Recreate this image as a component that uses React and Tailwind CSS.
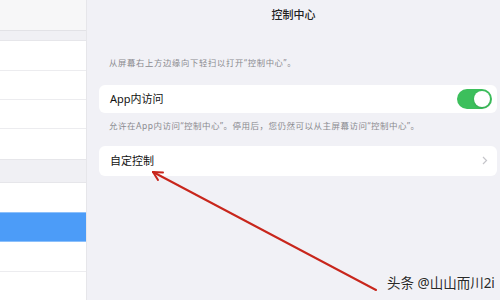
import React from "react";

const font = { fontFamily: '"Noto Sans", "Noto Sans CJK SC", sans-serif' };

const Toggle = () => (
  <div className="w-[35px] h-[20px] rounded-full bg-[#3cbf5c] p-[2px] flex justify-end">
    <div className="w-[16px] h-[16px] rounded-full bg-white shadow" />
  </div>
);

export default function App() {
  return (
    <div
      className="w-[500px] h-[300px] flex overflow-hidden bg-[#f1f1f6] relative"
      style={font}
    >
      {/* sidebar */}
      <div className="w-[87px] h-full bg-white flex flex-col border-r border-[#e6e6ea]">
        <div className="h-[31px] bg-[#f7f7f8] border-b border-[#e2e2e6]" />
        <div className="h-[10px] bg-[#f0f0f4] border-b border-[#e6e6ea]" />
        <div className="h-[30px] border-b border-[#ececef]" />
        <div className="h-[29px] border-b border-[#ececef]" />
        <div className="h-[29px] border-b border-[#ececef]" />
        <div className="h-[30px]" />
        <div className="h-[24px] bg-[#f0f0f4] border-y border-[#e6e6ea]" />
        <div className="h-[29px]" />
        <div className="h-[30px] bg-[#4c9cf8] border-y border-[#8cc0fb]" />
        <div className="h-[30px] border-b border-[#ececef]" />
        <div className="flex-1" />
      </div>

      {/* detail pane */}
      <div className="flex-1 flex flex-col">
        <div className="h-[31px] flex items-center justify-center text-[11px] font-medium text-[#222]">
          控制中心
        </div>
        <div className="pl-[12px] pr-[3px] pt-[28px]">
          <p className="pl-[10px] text-[8.3px] tracking-[0.7px] text-[#8a8a8f] leading-none">
            从屏幕右上方边缘向下轻扫以打开“控制中心”。
          </p>
          <div className="mt-[18px] h-[28px] bg-white rounded-[6px] flex items-center justify-between pl-[11px] pr-[5px]">
            <span className="text-[11px] text-[#111]">App内访问</span>
            <Toggle />
          </div>
          <p className="pl-[10px] mt-[9px] text-[8.5px] tracking-[0.5px] text-[#8a8a8f] leading-none">
            允许在App内访问“控制中心”。停用后，您仍然可以从主屏幕访问“控制中心”。
          </p>
          <div className="mt-[15px] h-[30px] bg-white rounded-[6px] flex items-center justify-between pl-[11px] pr-[9px]">
            <span className="text-[11px] text-[#111]">自定控制</span>
            <svg width="6" height="9" viewBox="0 0 6 9">
              <path d="M1 1 L4.5 4.5 L1 8" stroke="#c5c5ca" strokeWidth="1.2" fill="none" />
            </svg>
          </div>
        </div>
      </div>

      {/* annotation arrow */}
      <svg
        className="absolute left-0 top-0 pointer-events-none"
        width="500"
        height="300"
        viewBox="0 0 500 300"
      >
        <g stroke="#c8261c" strokeWidth="2" strokeLinecap="round" fill="none">
          <path d="M376 290 L153 172" />
          <path d="M153 172 L163 172.5" />
          <path d="M153 172 L158 180" />
        </g>
      </svg>

      <div className="absolute left-[387px] top-[277px] whitespace-nowrap text-[13.5px] text-[#2a2a2a] leading-none [text-shadow:0_0_2px_#fff]">
        头条 @山山而川2i
      </div>
    </div>
  );
}
